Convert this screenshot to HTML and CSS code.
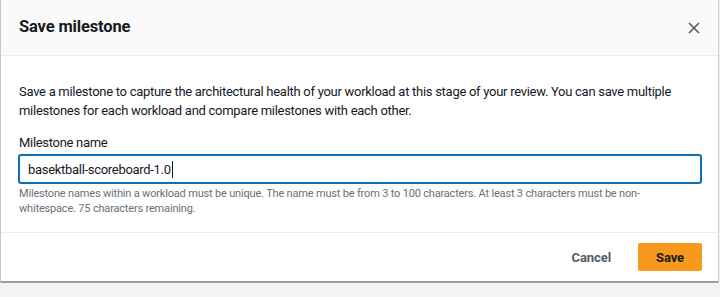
FILE: index.html
```html
<!DOCTYPE html>
<html lang="en">
<head>
<meta charset="utf-8">
<title>Save milestone</title>
<link rel="stylesheet" href="styles.css">
</head>
<body>
<div class="modal">
  <div class="modal-header">
    <h2 class="modal-title">Save milestone</h2>
    <button class="close-btn" aria-label="Close">
      <svg width="12" height="12" viewBox="0 0 12 12"><path d="M1 1 L11 11 M11 1 L1 11" stroke="#545b64" stroke-width="1.6" fill="none"/></svg>
    </button>
  </div>
  <div class="modal-body">
    <p class="intro">Save a milestone to capture the architectural health of your workload at this stage of your review. You can save multiple milestones for each workload and compare milestones with each other.</p>
    <label class="field-label">Milestone name</label>
    <div class="input" role="textbox">basektball-scoreboard-1.0<span class="caret"></span></div>
    <p class="hint">Milestone names within a workload must be unique. The name must be from 3 to 100 characters. At least 3 characters must be non-whitespace. 75 characters remaining.</p>
  </div>
  <div class="modal-footer">
    <button class="btn btn-link">Cancel</button>
    <button class="btn btn-primary">Save</button>
  </div>
</div>
</body>
</html>
```
FILE: styles.css
```css
* { box-sizing: border-box; }
html, body { margin: 0; padding: 0; }
body {
  background: #f2f3f3;
  font-family: Roboto, "Noto Sans", sans-serif;
  color: #16191f;
  width: 720px;
  height: 297px;
  overflow: hidden;
}
.modal {
  width: 719px;
  background: #fff;
  border-left: 1px solid #c2c8c8;
  border-right: 1px solid #c9cfcf;
  border-bottom: 2px solid #9aa1a1;
}
.modal-header {
  height: 56px;
  background: #fafafa;
  border-bottom: 1px solid #eaeded;
  display: flex;
  align-items: center;
  justify-content: space-between;
  padding: 0 18px 2px 18px;
}
.modal-title {
  margin: 0;
  font-size: 16.5px;
  font-weight: 700;
  letter-spacing: -0.15px;
}
.close-btn {
  border: 0;
  background: none;
  padding: 0;
  width: 12px;
  height: 12px;
  display: flex;
  margin-top: 2px;
}
.modal-body {
  padding: 26px 16px 16px 17px;
}
.intro {
  margin: 0 0 13px 1px;
  font-size: 13px;
  line-height: 19px;
  letter-spacing: -0.28px;
}
.field-label {
  display: block;
  margin: 0 0 2px 1px;
  font-size: 13px;
  line-height: 19px;
  letter-spacing: -0.3px;
}
.input {
  height: 30px;
  border: 2px solid #0f6fb5;
  border-radius: 3px;
  padding: 0 8px;
  display: flex;
  align-items: center;
  font-size: 13px;
  letter-spacing: -0.3px;
}
.caret {
  display: inline-block;
  width: 1px;
  height: 17px;
  background: #16191f;
  margin-left: 1px;
}
.hint {
  margin: 2px 0 0 1px;
  max-width: 650px;
  font-size: 11px;
  line-height: 15px;
  color: #687078;
  letter-spacing: -0.18px;
}
.modal-footer {
  border-top: 1px solid #eaeded;
  height: 49px;
  display: flex;
  justify-content: flex-end;
  align-items: center;
  padding: 0 16px 0 0;
  gap: 11px;
}
.btn {
  font-family: Roboto, "Noto Sans", sans-serif;
  font-size: 13px;
  font-weight: 700;
  height: 28px;
  border-radius: 2px;
  border: 0;
  letter-spacing: -0.1px;
}
.btn-link {
  background: none;
  color: #545b64;
  padding: 0 16px;
}
.btn-primary {
  background: #f8991d;
  color: #16191f;
  width: 64px;
  padding: 0;
}
```
